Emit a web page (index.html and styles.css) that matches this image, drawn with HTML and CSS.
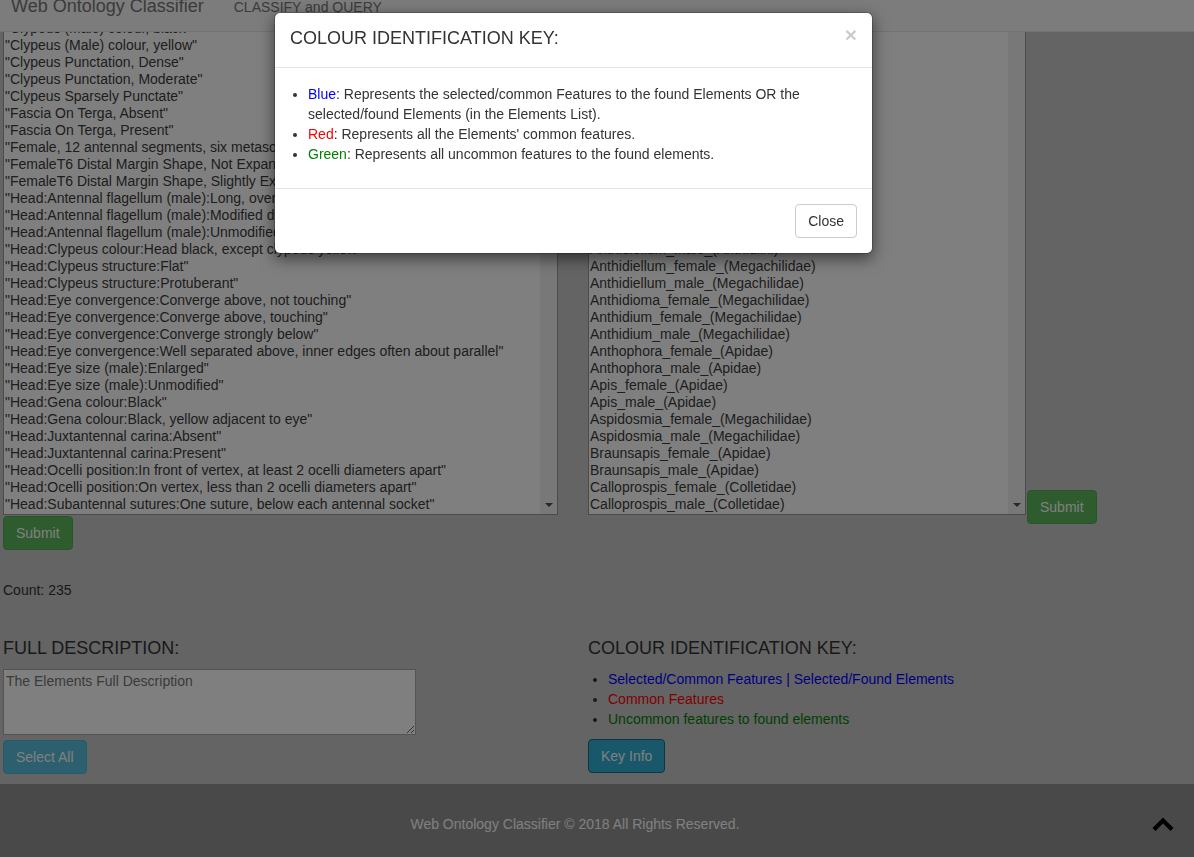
FILE: index.html
```html
<!DOCTYPE html>
<html lang="en">
<head>
<meta charset="utf-8">
<title>Web Ontology Classifier</title>
<link rel="stylesheet" href="styles.css">
</head>
<body>
<header class="navbar">
  <div class="navbar-inner">
    <span class="brand">Web Ontology Classifier</span>
    <span class="nav-link">CLASSIFY and QUERY</span>
  </div>
</header>

<main class="page">
  <section class="lists-row">
    <div class="col-features">
      <div class="listbox listbox-features">
        <div class="options">
          <div class="opt first">"Clypeus (Male) colour, black"</div>
          <div class="opt">"Clypeus (Male) colour, yellow"</div>
          <div class="opt">"Clypeus Punctation, Dense"</div>
          <div class="opt">"Clypeus Punctation, Moderate"</div>
          <div class="opt">"Clypeus Sparsely Punctate"</div>
          <div class="opt">"Fascia On Terga, Absent"</div>
          <div class="opt">"Fascia On Terga, Present"</div>
          <div class="opt">"Female, 12 antennal segments, six metasomal terga"</div>
          <div class="opt">"FemaleT6 Distal Margin Shape, Not Expanded"</div>
          <div class="opt">"FemaleT6 Distal Margin Shape, Slightly Expanded"</div>
          <div class="opt">"Head:Antennal flagellum (male):Long, over half body length"</div>
          <div class="opt">"Head:Antennal flagellum (male):Modified distally"</div>
          <div class="opt">"Head:Antennal flagellum (male):Unmodified"</div>
          <div class="opt">"Head:Clypeus colour:Head black, except clypeus yellow"</div>
          <div class="opt">"Head:Clypeus structure:Flat"</div>
          <div class="opt">"Head:Clypeus structure:Protuberant"</div>
          <div class="opt">"Head:Eye convergence:Converge above, not touching"</div>
          <div class="opt">"Head:Eye convergence:Converge above, touching"</div>
          <div class="opt">"Head:Eye convergence:Converge strongly below"</div>
          <div class="opt">"Head:Eye convergence:Well separated above, inner edges often about parallel"</div>
          <div class="opt">"Head:Eye size (male):Enlarged"</div>
          <div class="opt">"Head:Eye size (male):Unmodified"</div>
          <div class="opt">"Head:Gena colour:Black"</div>
          <div class="opt">"Head:Gena colour:Black, yellow adjacent to eye"</div>
          <div class="opt">"Head:Juxtantennal carina:Absent"</div>
          <div class="opt">"Head:Juxtantennal carina:Present"</div>
          <div class="opt">"Head:Ocelli position:In front of vertex, at least 2 ocelli diameters apart"</div>
          <div class="opt">"Head:Ocelli position:On vertex, less than 2 ocelli diameters apart"</div>
          <div class="opt">"Head:Subantennal sutures:One suture, below each antennal socket"</div>
        </div>
        <div class="scrollbar"><span class="arrow-down"></span></div>
      </div>
      <button class="btn btn-success btn-under">Submit</button>
    </div>

    <div class="col-elements">
      <div class="listbox listbox-elements">
        <div class="options">
          <div class="opt first">Acamptopoeum_female_(Andrenidae)</div>
          <div class="opt">Acamptopoeum_male_(Andrenidae)</div>
          <div class="opt">Amegilla_female_(Apidae)</div>
          <div class="opt">Amegilla_male_(Apidae)</div>
          <div class="opt">Ancyla_female_(Apidae)</div>
          <div class="opt">Ancyla_male_(Apidae)</div>
          <div class="opt">Andrena_female_(Andrenidae)</div>
          <div class="opt">Andrena_male_(Andrenidae)</div>
          <div class="opt">Anthemurgus_female_(Andrenidae)</div>
          <div class="opt">Anthemurgus_male_(Andrenidae)</div>
          <div class="opt">Anthidiella_female_(Megachilidae)</div>
          <div class="opt">Anthidiella_male_(Megachilidae)</div>
          <div class="opt">Anthidiellum_female_(Anthidiini)</div>
          <div class="opt">Anthidiellum_male_(Anthidiini)</div>
          <div class="opt">Anthidiellum_female_(Megachilidae)</div>
          <div class="opt">Anthidiellum_male_(Megachilidae)</div>
          <div class="opt">Anthidioma_female_(Megachilidae)</div>
          <div class="opt">Anthidium_female_(Megachilidae)</div>
          <div class="opt">Anthidium_male_(Megachilidae)</div>
          <div class="opt">Anthophora_female_(Apidae)</div>
          <div class="opt">Anthophora_male_(Apidae)</div>
          <div class="opt">Apis_female_(Apidae)</div>
          <div class="opt">Apis_male_(Apidae)</div>
          <div class="opt">Aspidosmia_female_(Megachilidae)</div>
          <div class="opt">Aspidosmia_male_(Megachilidae)</div>
          <div class="opt">Braunsapis_female_(Apidae)</div>
          <div class="opt">Braunsapis_male_(Apidae)</div>
          <div class="opt">Calloprospis_female_(Colletidae)</div>
          <div class="opt">Calloprospis_male_(Colletidae)</div>
        </div>
        <div class="scrollbar"><span class="arrow-down"></span></div>
      </div>
      <button class="btn btn-success btn-side">Submit</button>
    </div>
  </section>

  <p class="count">Count: 235</p>

  <section class="info-row">
    <div class="col-desc">
      <h4 class="section-title">FULL DESCRIPTION:</h4>
      <textarea class="desc" placeholder="The Elements Full Description"></textarea>
      <button class="btn btn-info btn-gap">Select All</button>
    </div>
    <div class="col-key">
      <h4 class="section-title">COLOUR IDENTIFICATION KEY:</h4>
      <ul class="key-list">
        <li><span class="c-blue">Selected/Common Features | Selected/Found Elements</span></li>
        <li><span class="c-red">Common Features</span></li>
        <li><span class="c-green">Uncommon features to found elements</span></li>
      </ul>
      <button class="btn btn-info btn-focus">Key Info</button>
    </div>
  </section>
</main>

<footer class="footer">
  <p class="footer-text">Web Ontology Classifier &copy; 2018 All Rights Reserved.</p>
  <a class="to-top" href="#" aria-label="Back to top">
    <svg width="22" height="14" viewBox="0 0 22 14"><polyline points="2,12.5 11,3.5 20,12.5" fill="none" stroke="#000" stroke-width="4.2"/></svg>
  </a>
</footer>

<div class="backdrop"></div>

<div class="modal">
  <div class="modal-header">
    <button class="close" aria-label="Close">&times;</button>
    <h4 class="modal-title">COLOUR IDENTIFICATION KEY:</h4>
  </div>
  <div class="modal-body">
    <ul class="modal-list">
      <li><span class="c-blue">Blue</span>: Represents the selected/common Features to the found Elements OR the selected/found Elements (in the Elements List).</li>
      <li><span class="c-red">Red</span>: Represents all the Elements' common features.</li>
      <li><span class="c-green">Green</span>: Represents all uncommon features to the found elements.</li>
    </ul>
  </div>
  <div class="modal-footer">
    <button class="btn btn-default">Close</button>
  </div>
</div>
</body>
</html>
```

FILE: styles.css
```css
* { box-sizing: border-box; }

html, body {
  margin: 0;
  padding: 0;
  height: 857px;
  overflow: hidden;
}

body {
  font-family: "Liberation Sans", Arial, Helvetica, sans-serif;
  font-size: 14px;
  line-height: 20px;
  color: #333;
  background: #c8c8c8;
}

/* Navbar (scrolled, only lower part visible) */
.navbar {
  height: 32px;
  background: #f8f8f8;
  border-bottom: 1px solid #e7e7e7;
  overflow: hidden;
}
.navbar-inner {
  display: flex;
  align-items: baseline;
  margin-top: -4px;
  padding-left: 11px;
}
.brand {
  font-size: 18px;
  line-height: 20px;
  color: #777;
}
.nav-link {
  margin-left: 30px;
  font-size: 14px;
  color: #777;
}

/* Main */
.page {
  padding-left: 3px;
}

.lists-row {
  display: flex;
  align-items: flex-start;
}

.col-features {
  width: 555px;
}

.col-elements {
  display: flex;
  align-items: flex-end;
  margin-left: 30px;
}

.listbox {
  display: flex;
  height: 483px;
  background: #fff;
  border: 1px solid #999;
  border-top: none;
  overflow: hidden;
}
.listbox-features { width: 555px; }
.listbox-elements { width: 438px; }

.options {
  flex: 1;
  overflow: hidden;
  color: #3c3c3c;
}
.opt {
  height: 17px;
  line-height: 17px;
  padding-left: 1px;
  white-space: nowrap;
}
.opt.first { margin-top: -12px; }

.scrollbar {
  width: 17px;
  flex: none;
  background: #f1f1f1;
  display: flex;
  flex-direction: column;
  justify-content: flex-end;
  align-items: center;
}
.arrow-down {
  width: 0;
  height: 0;
  border-left: 4px solid transparent;
  border-right: 4px solid transparent;
  border-top: 4px solid #505050;
  margin-bottom: 7px;
}

/* Buttons */
.btn {
  display: inline-block;
  font-family: inherit;
  font-size: 14px;
  line-height: 20px;
  padding: 6px 12px;
  border: 1px solid transparent;
  border-radius: 4px;
  cursor: pointer;
}
.btn-success {
  color: #fff;
  background: #5cb85c;
  border-color: #4cae4c;
}
.btn-info {
  color: #fff;
  background: #5bc0de;
  border-color: #46b8da;
}
.btn-focus {
  background: #31b0d5;
  border-color: #1b6d85;
}
.btn-default {
  color: #333;
  background: #fff;
  border-color: #ccc;
}
.btn-under {
  display: block;
  margin-top: 1px;
}
.btn-side {
  margin-left: 1px;
  margin-bottom: -9px;
}
.btn-gap {
  display: block;
  margin-top: 5px;
}

.count {
  margin: 30px 0 0;
  line-height: 20px;
}

/* Info row */
.info-row {
  display: flex;
  margin-top: 38px;
}
.col-desc { width: 585px; }
.col-key { flex: 1; }

.section-title {
  margin: 0 0 11px;
  font-size: 18px;
  font-weight: 400;
  line-height: 20px;
  color: #333;
}

.desc {
  display: block;
  width: 413px;
  height: 66px;
  margin: 0;
  padding: 3px 2px;
  font-family: "Liberation Sans", Arial, sans-serif;
  font-size: 14px;
  line-height: 17px;
  border: 1px solid #a9a9a9;
  background: #fff;
  resize: both;
}
.desc::placeholder { color: #757575; }

.key-list {
  margin: 0 0 10px;
  padding-left: 20px;
}

.c-blue { color: #0000ff; }
.c-red { color: #ff0000; }
.c-green { color: #008000; }

/* Footer */
.footer {
  display: flex;
  align-items: center;
  margin-top: 10px;
  height: 73px;
  padding-top: 7px;
  background: #939393;
}
.footer-text {
  flex: 1;
  margin: 0;
  text-align: center;
  color: #fff;
}
.to-top {
  display: block;
  width: 22px;
  height: 14px;
  margin: 0 20px 0 2px;
  line-height: 0;
}

/* Modal */
.backdrop {
  position: fixed;
  inset: 0;
  background: rgba(0, 0, 0, 0.5);
}

.modal {
  position: absolute;
  left: 274px;
  top: 12px;
  width: 599px;
  background: #fff;
  border: 1px solid rgba(0, 0, 0, 0.2);
  border-radius: 6px;
  box-shadow: 0 5px 15px rgba(0, 0, 0, 0.5);
  background-clip: padding-box;
}
.modal-header {
  padding: 13px 15px 17px;
  border-bottom: 1px solid #e5e5e5;
}
.modal-title {
  margin: 0;
  font-size: 18px;
  font-weight: 400;
  line-height: 24px;
  color: #333;
}
.close {
  float: right;
  margin-top: -2px;
  padding: 0;
  border: 0;
  background: transparent;
  font-family: inherit;
  font-size: 21px;
  font-weight: 700;
  line-height: 1;
  color: #000;
  opacity: 0.2;
  text-shadow: 0 1px 0 #fff;
  cursor: pointer;
}
.modal-body {
  padding: 16px 15px 14px;
}
.modal-list {
  margin: 0 0 10px;
  padding-left: 18px;
}
.modal-footer {
  padding: 15px;
  text-align: right;
  border-top: 1px solid #e5e5e5;
}
```
